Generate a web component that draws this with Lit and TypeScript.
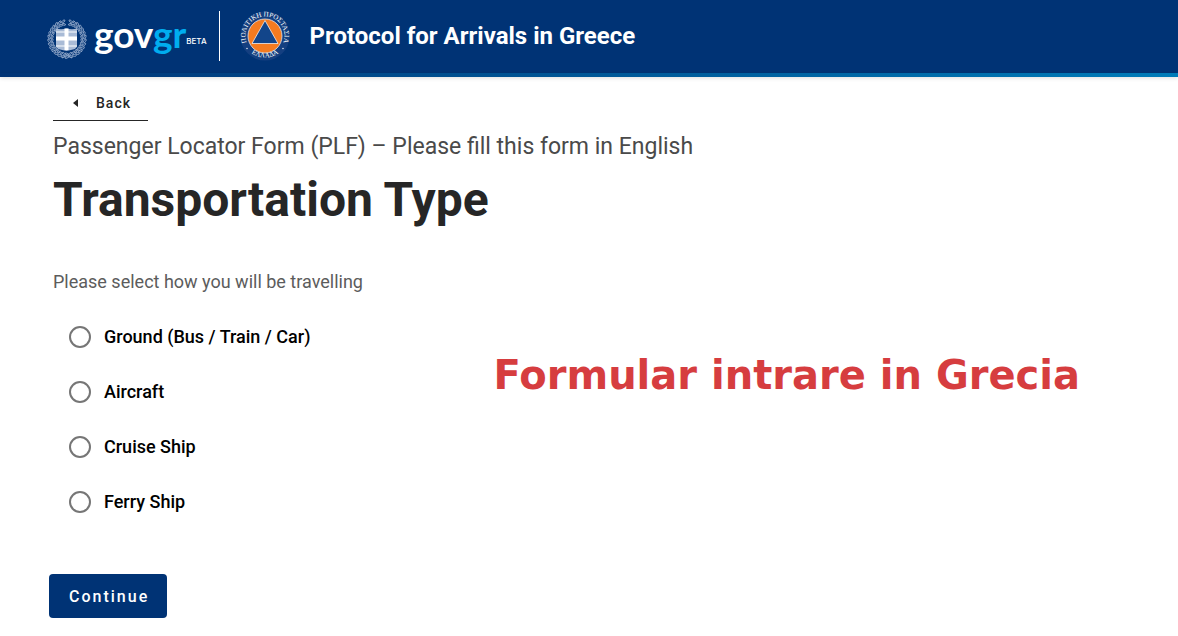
import { LitElement, html, css, svg } from "lit";
import { customElement, state } from "lit/decorators.js";

const TRANSPORT_TYPES = [
  { value: "ground", label: "Ground (Bus / Train / Car)" },
  { value: "aircraft", label: "Aircraft" },
  { value: "cruise", label: "Cruise Ship" },
  { value: "ferry", label: "Ferry Ship" },
];

/* Leaves of the laurel wreath, placed in two rings around the shield. */
const leaves = Array.from({ length: 30 }, (_, i) => i * 12).filter((a) => a > 4 && a < 356);

const emblem = html`<svg class="emblem" viewBox="0 0 40 40" aria-hidden="true">
  <g fill="none" stroke="#8fa6c8" stroke-width="0.900">
    ${leaves.map(
      (a) => svg`<g transform=${`rotate(${a} 20 20)`}>
        <ellipse cx="20" cy="2" rx="2" ry="0.900" transform=${`rotate(${a < 180 ? 28 : -28} 20 2)`}></ellipse>
        <ellipse cx="20" cy="5" rx="1.800" ry="0.800" transform=${`rotate(${a < 180 ? -28 : 28} 20 5)`}></ellipse>
      </g>`
    )}
    <path d="M15 39l5-3 5 3"></path>
  </g>
  <path d="M9 9.500q5 1.500 10.500 0q5.500 1.500 10.500 0v17q0 3-4 4l-6.500 1.500-6.500-1.500q-4-1-4-4z" fill="#a9bbd6"></path>
  <path d="M9 13h21M9 27h21" stroke="#dfe7f1" stroke-width="1.500"></path>
  <path d="M17.500 9.500h4v8h8.500v4h-8.500v9.500h-4v-9.500h-8.500v-4h8.500z" fill="#fff"></path>
</svg>`;

const civilProtection = html`<svg class="seal" viewBox="0 0 50 50" role="img" aria-label="Civil Protection Greece">
  <defs>
    <path id="arc-top" d="M8 34.500A19.500 19.500 0 1 1 42 34.500"></path>
    <path id="arc-bottom" d="M6 36.500A23 23 0 0 0 44 36.500"></path>
  </defs>
  <circle cx="25" cy="25" r="24.500" fill="#143f80"></circle>
  <circle cx="25" cy="25" r="17" fill="#f47b20" stroke="#dfe5ef" stroke-width="0.800"></circle>
  <path d="M25 9.500L38 32.500H12z" fill="#12458a" stroke="#fff" stroke-width="0.700"></path>
  <g class="seal-text">
    <text><textPath href="#arc-top" startOffset="50%" text-anchor="middle">ΠΟΛΙΤΙΚΗ ΠΡΟΣΤΑΣΙΑ</textPath></text>
    <text><textPath href="#arc-bottom" startOffset="50%" text-anchor="middle">ΕΛΛΑΔΑ</textPath></text>
  </g>
  <circle cx="7" cy="37.500" r="0.700" fill="#fff"></circle>
  <circle cx="43" cy="37.500" r="0.700" fill="#fff"></circle>
</svg>`;

@customElement("app-header")
export class AppHeader extends LitElement {
  static styles = css`
    :host {
      display: block;
    }
    .bar {
      display: flex;
      align-items: center;
      padding: 11px 47px 12px;
      background: #003375;
      color: #fff;
      font-family: Roboto, sans-serif;
    }
    .stripe {
      height: 4px;
      background: linear-gradient(90deg, #003375, #007bb8);
      box-shadow: 0 1px 4px rgba(0, 0, 0, 0.15);
    }
    .brand {
      display: flex;
      align-items: center;
      height: 50px;
      padding-right: 12px;
      border-right: 1px solid #fff;
      color: inherit;
      text-decoration: none;
    }
    .emblem {
      width: 40px;
      height: 40px;
      margin: 6px 7px 0 0;
    }
    .word {
      font: 700 37px/46px Lato, sans-serif;
      padding-bottom: 4px;
    }
    .accent {
      color: #00adef;
    }
    .beta {
      font: 500 8px/12px Inter, sans-serif;
      margin-top: 10px;
    }
    .seal {
      width: 50px;
      height: 50px;
      margin: 0 20px;
      flex: none;
    }
    .seal-text {
      fill: #fff;
      font: 400 7px "Liberation Serif", serif;
    }
    .title {
      font-size: 24px;
      line-height: 32px;
      font-weight: 700;
    }
  `;

  render() {
    return html`<header>
      <div class="bar">
        <a class="brand" href="#home">
          ${emblem}<span class="word">gov<span class="accent">gr</span></span><span class="beta">BETA</span>
        </a>
        ${civilProtection}
        <span class="title">Protocol for Arrivals in Greece</span>
      </div>
      <div class="stripe"></div>
    </header>`;
  }
}

@customElement("app-root")
export class AppRoot extends LitElement {
  @state() private selected = "";

  static styles = css`
    :host {
      display: block;
      min-height: 100vh;
      background: #fff;
      color: #262626;
      font-family: Roboto, sans-serif;
    }
    main {
      padding: 9px 53px 18px;
    }
    .back {
      display: inline-flex;
      align-items: center;
      gap: 18px;
      height: 35px;
      padding: 0 17px 0 20px;
      border: 0;
      border-bottom: 1px solid #262626;
      background: none;
      color: inherit;
      font: 500 14px/20px Roboto, sans-serif;
      letter-spacing: 1px;
      cursor: pointer;
    }
    .arrow {
      width: 5px;
      height: 8px;
    }
    .caption {
      margin: 10px 0 0;
      color: #4a4a4a;
      font-size: 23px;
      line-height: 32px;
    }
    h1 {
      margin: 7px 0 0;
      font-size: 48px;
      line-height: 60px;
      font-weight: 700;
    }
    .body {
      display: flex;
      align-items: flex-start;
      justify-content: space-between;
      margin-top: 40px;
    }
    fieldset {
      margin: 0;
      padding: 0;
      border: 0;
      min-width: 0;
    }
    legend {
      padding: 0;
      margin-bottom: 15px;
      color: #5c5c5c;
      font-size: 18px;
      line-height: 24px;
    }
    .option {
      display: flex;
      align-items: center;
      gap: 13px;
      padding: 16px 16px 15px;
      color: #000;
      font-size: 18px;
      line-height: 24px;
      font-weight: 500;
      cursor: pointer;
    }
    .radio {
      appearance: none;
      box-sizing: border-box;
      width: 22px;
      height: 22px;
      margin: 0;
      border: 2px solid #767676;
      border-radius: 50%;
      background: #fff;
    }
    .radio:checked {
      border-color: #003375;
      background: radial-gradient(#003375 50%, #fff 55%);
    }
    .note {
      margin: 80px 45px 0 0;
      color: #d63d3f;
      font: 700 40px/50px "DejaVu Sans", sans-serif;
    }
    .continue {
      height: 44px;
      margin: 45px 0 0 -4px;
      padding: 1px 18px 0 20px;
      border: 0;
      border-radius: 4px;
      background: #003375;
      color: #fff;
      font: 500 16px/24px Roboto, sans-serif;
      letter-spacing: 2px;
      cursor: pointer;
    }
  `;

  render() {
    return html`
      <app-header></app-header>
      <main>
        <button class="back" type="button">
          <svg class="arrow" viewBox="0 0 5 8" aria-hidden="true"><path d="M5 0v8L0 4z" fill="#262626"></path></svg>
          Back
        </button>
        <p class="caption">Passenger Locator Form (PLF) – Please fill this form in English</p>
        <h1>Transportation Type</h1>
        <div class="body">
          <fieldset>
            <legend>Please select how you will be travelling</legend>
            ${TRANSPORT_TYPES.map(
              (t) => html`<label class="option">
                <input
                  class="radio"
                  type="radio"
                  name="transport"
                  .value=${t.value}
                  .checked=${this.selected === t.value}
                  @change=${() => (this.selected = t.value)}
                />
                ${t.label}
              </label>`
            )}
          </fieldset>
          <p class="note">Formular intrare in Grecia</p>
        </div>
        <button class="continue" type="button">Continue</button>
      </main>
    `;
  }
}
